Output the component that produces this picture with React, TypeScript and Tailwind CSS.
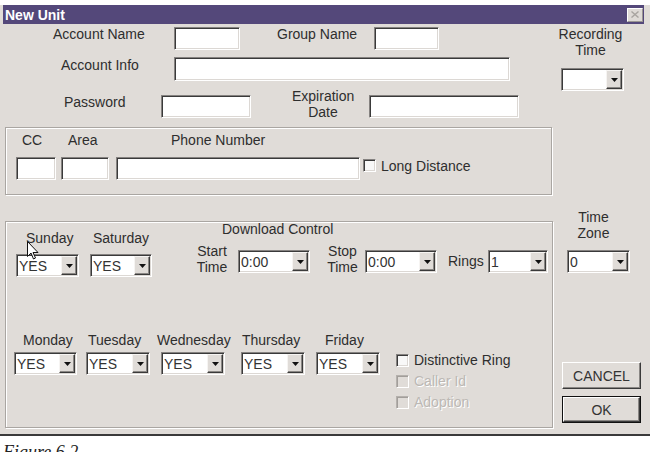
import React from 'react';

const sunken =
  'border border-t-[#858280] border-l-[#858280] border-b-white border-r-white shadow-[inset_1px_1px_0_#3a3a3a,inset_-1px_-1px_0_#dcd8d4]';

function Field({ className = '' }: { className?: string }) {
  return <div className={`${sunken} h-[23px] bg-white ${className}`} />;
}

function Combo({ value = '', className = '' }: { value?: string; className?: string }) {
  return (
    <div className={`${sunken} flex h-[23px] bg-white p-[1px] ${className}`}>
      <div className="flex flex-1 items-center pl-[1px] text-[#333]">{value}</div>
      <div className="flex w-[16px] items-center justify-center border border-t-[#f6f4f2] border-l-[#f6f4f2] border-b-[#3a3a3a] border-r-[#3a3a3a] bg-[#e0dcd8] shadow-[inset_-1px_-1px_0_#8a8784]">
        <svg width="7" height="4" viewBox="0 0 7 4">
          <path d="M0 0h7L3.5 4z" fill="#111" />
        </svg>
      </div>
    </div>
  );
}

function Check({ disabled = false }: { disabled?: boolean }) {
  return disabled ? (
    <div className="h-[13px] w-[13px] border border-t-[#b4b0ac] border-l-[#b4b0ac] border-b-white border-r-white shadow-[inset_1px_1px_0_#a29e9a] bg-[#e0dcd8]" />
  ) : (
    <div className={`${sunken} h-[13px] w-[13px] bg-[#f8f8f8]`} />
  );
}

function Button({ label, isDefault = false }: { label: string; isDefault?: boolean }) {
  const face = (
    <div className="flex h-full w-full items-center justify-center border border-t-white border-l-white border-b-[#3a3a3a] border-r-[#3a3a3a] shadow-[inset_-1px_-1px_0_#8a8784] text-[#333]">
      {label}
    </div>
  );
  return isDefault ? (
    <div className="h-[27px] w-[79px] border border-[#111]">{face}</div>
  ) : (
    <div className="h-[27px] w-[79px]">{face}</div>
  );
}

function Day({ label, labelClass, boxClass }: { label: string; labelClass: string; boxClass: string }) {
  return (
    <div className={boxClass}>
      <div className={`whitespace-nowrap ${labelClass}`}>{label}</div>
      <Combo value="YES" className="mt-[4px]" />
    </div>
  );
}

export default function App() {
  return (
    <div className="relative h-[452px] w-[650px] overflow-hidden bg-white font-['Liberation_Sans',Arial,sans-serif] text-[14px] leading-[16px] text-[#2e2e2e]">
      <div className="mt-[5px] bg-[#e0dcd8]">
        {/* title bar */}
        <div className="ml-[3px] mr-[6px] flex h-[19px] items-center justify-between bg-[#54487a] pl-[2px] pr-[1px]">
          <span className="font-bold text-white">New Unit</span>
          <div className="flex h-[14px] w-[16px] items-center justify-center border border-t-white border-l-white border-b-[#9a9692] border-r-[#9a9692] bg-[#dedad6]">
            <svg width="8" height="7" viewBox="0 0 8 7">
              <path d="M0.5 0.5l7 6M7.5 0.5l-7 6" stroke="#a8a4a0" strokeWidth="1.4" />
            </svg>
          </div>
        </div>

        {/* body */}
        <div className="flex h-[410px]">
          <div className="w-[553px] shrink-0">
            <div className="mt-[3px] flex items-start">
              <div className="ml-[53px] mt-[-1px] w-[121px]">Account Name</div>
              <Field className="w-[66px]" />
              <div className="ml-[37px] mt-[-1px] w-[97px]">Group Name</div>
              <Field className="w-[65px]" />
            </div>

            <div className="mt-[7px] flex items-start">
              <div className="ml-[61px] w-[113px]">Account Info</div>
              <Field className="h-[24px] w-[336px]" />
            </div>

            <div className="mt-[14px] flex items-start">
              <div className="ml-[64px] mt-[-1px] w-[97px]">Password</div>
              <Field className="w-[90px]" />
              <div className="ml-[41px] mt-[-7px] w-[62px] text-center">
                Expiration
                <br />
                Date
              </div>
              <Field className="ml-[15px] w-[150px]" />
            </div>

            {/* phone group */}
            <div className="ml-[5px] mt-[7px] h-[68px] w-[547px] border border-[#aaa6a2] shadow-[1px_1px_0_#fff,inset_1px_1px_0_#fff]">
              <div className="mt-[4px] flex">
                <div className="ml-[16px] w-[46px]">CC</div>
                <div className="w-[103px]">Area</div>
                <div>Phone Number</div>
              </div>
              <div className="mt-[9px] flex items-start">
                <Field className="ml-[10px] w-[40px]" />
                <Field className="ml-[5px] w-[48px]" />
                <Field className="ml-[7px] w-[244px]" />
                <div className="ml-[3px] mt-[2px]">
                  <Check />
                </div>
                <div className="ml-[5px] mt-[1px]">Long Distance</div>
              </div>
            </div>

            {/* download group */}
            <div className="ml-[5px] mt-[26px] h-[207px] w-[548px] border border-[#aaa6a2] shadow-[1px_1px_0_#fff,inset_1px_1px_0_#fff]">
              <div className="flex items-start">
                <div className="ml-[10px] w-[63px]">
                  <div className="mt-[8px] pl-[10px]">Sunday</div>
                  <Combo value="YES" className="mt-[8px]" />
                </div>
                <div className="ml-[11px] w-[62px]">
                  <div className="mt-[8px] pl-[3px]">Saturday</div>
                  <Combo value="YES" className="mt-[8px]" />
                </div>
                <div className="flex flex-col">
                  <div className="ml-[70px] mt-[-1px]">Download Control</div>
                  <div className="mt-[6px] flex items-start">
                    <div className="ml-[43px] w-[34px] text-center">
                      Start
                      <br />
                      Time
                    </div>
                    <Combo value="0:00" className="ml-[9px] mt-[7px] w-[72px]" />
                    <div className="ml-[16px] w-[33px] text-center">
                      Stop
                      <br />
                      Time
                    </div>
                    <Combo value="0:00" className="ml-[6px] mt-[7px] w-[72px]" />
                    <div className="ml-[11px] mt-[10px] w-[40px]">Rings</div>
                    <Combo value="1" className="mt-[7px] w-[60px]" />
                  </div>
                </div>
              </div>

              <div className="mt-[55px] flex items-start">
                <Day label="Monday" boxClass="ml-[8px] w-[63px]" labelClass="pl-[9px]" />
                <Day label="Tuesday" boxClass="ml-[9px] w-[64px]" labelClass="pl-[2px]" />
                <Day label="Wednesday" boxClass="ml-[11px] w-[64px]" labelClass="-ml-1" />
                <Day label="Thursday" boxClass="ml-[16px] w-[64px]" labelClass="pl-[1px]" />
                <Day label="Friday" boxClass="ml-[11px] w-[64px]" labelClass="pl-[9px]" />
                <div className="ml-[16px] mt-[20px]">
                  <div className="flex h-[21px] items-start">
                    <div className="mt-[2px]">
                      <Check />
                    </div>
                    <span className="ml-[5px]">Distinctive Ring</span>
                  </div>
                  <div className="flex h-[21px] items-start">
                    <div className="mt-[2px]">
                      <Check disabled />
                    </div>
                    <span className="ml-[5px] text-[#bcb8b4] [text-shadow:1px_1px_0_#fff]">Caller Id</span>
                  </div>
                  <div className="flex h-[21px] items-start">
                    <div className="mt-[2px]">
                      <Check disabled />
                    </div>
                    <span className="ml-[5px] text-[#bcb8b4] [text-shadow:1px_1px_0_#fff]">Adoption</span>
                  </div>
                </div>
              </div>
            </div>
          </div>

          {/* right column */}
          <div className="flex-1">
            <div className="mt-[2px] w-[75px] text-center">
              Recording
              <br />
              Time
            </div>
            <Combo className="ml-[8px] mt-[10px] w-[63px]" />
            <div className="mt-[118px] w-[81px] text-center">
              Time
              <br />
              Zone
            </div>
            <Combo value="0" className="ml-[14px] mt-[9px] w-[63px]" />
            <div className="ml-[9px] mt-[89px]">
              <Button label="CANCEL" />
            </div>
            <div className="ml-[9px] mt-[7px]">
              <Button label="OK" isDefault />
            </div>
          </div>
        </div>
        <div className="h-[2px] bg-[#3a3a3a]" />
      </div>

      <div className="ml-[3px] mt-[7px] font-['Liberation_Serif',serif] text-[18px] italic leading-[18px] text-[#222]">
        Figure 6.2
      </div>

      {/* mouse pointer */}
      <svg className="absolute left-[27px] top-[241px]" width="12" height="20" viewBox="0 0 12 20">
        <path d="M0.5 0.5v15l3.5-3.5 2.5 6 2-1-2.5-5.5h5z" fill="#fff" stroke="#111" strokeWidth="1" strokeLinejoin="miter" />
      </svg>
    </div>
  );
}
